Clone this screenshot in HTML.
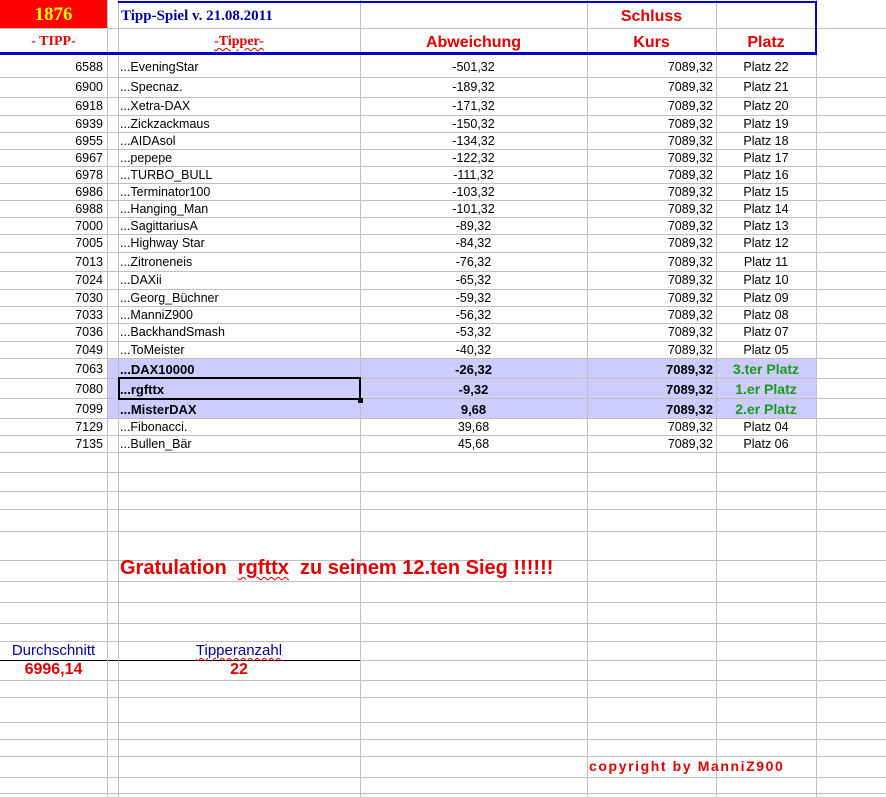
<!DOCTYPE html>
<html><head><meta charset="utf-8"><style>
*{margin:0;padding:0;box-sizing:border-box}
body{width:886px;height:797px;background:#fff;position:relative;overflow:hidden;font-family:"Liberation Sans",Arial,sans-serif;font-size:12.5px;color:#000}
.h{position:absolute;left:0;width:886px;height:1px;background:#c0c0c0}
.v{position:absolute;top:0;height:797px;width:1px;background:#c0c0c0}
.r{position:absolute;left:0;width:886px}
.r span{position:absolute;top:0;height:100%;display:flex;align-items:center;white-space:nowrap}
.a{left:0;width:103px;justify-content:flex-end}
.n{left:120px}
.ab{left:360px;width:227px;justify-content:center}
.k{left:587px;width:126px;justify-content:flex-end}
.p{left:716px;width:100px;justify-content:center}
.b span.n,.b span.ab,.b span.k{font-weight:bold;font-size:13px}
.b span.p{color:#1a9a1a;font-weight:bold;font-size:14px}
.t{position:absolute;white-space:nowrap}
.red{color:#e00000}
.wavy{text-decoration:underline wavy #e00000;text-decoration-thickness:1px;text-underline-offset:2px}
</style></head><body>
<div style="position:absolute;left:0;top:0;width:107px;height:28px;background:#ff0000"></div>
<div style="position:absolute;left:107px;top:358px;width:709px;height:60px;background:#ccccff"></div>

<div class="h" style="top:28px"></div>
<div class="h" style="top:77px"></div><div class="h" style="top:97px"></div><div class="h" style="top:115px"></div>
<div class="h" style="top:132px"></div><div class="h" style="top:149px"></div><div class="h" style="top:166px"></div>
<div class="h" style="top:183px"></div><div class="h" style="top:200px"></div><div class="h" style="top:217px"></div>
<div class="h" style="top:234px"></div><div class="h" style="top:252px"></div><div class="h" style="top:271px"></div>
<div class="h" style="top:289px"></div><div class="h" style="top:306px"></div><div class="h" style="top:323px"></div>
<div class="h" style="top:341px"></div><div class="h" style="top:358px"></div><div class="h" style="top:378px"></div>
<div class="h" style="top:398px"></div><div class="h" style="top:418px"></div><div class="h" style="top:435px"></div>
<div class="h" style="top:452px"></div><div class="h" style="top:472px"></div><div class="h" style="top:491px"></div>
<div class="h" style="top:509px"></div><div class="h" style="top:531px"></div><div class="h" style="top:560px"></div>
<div class="h" style="top:581px"></div><div class="h" style="top:602px"></div><div class="h" style="top:623px"></div>
<div class="h" style="top:641px"></div><div class="h" style="top:680px"></div>
<div class="h" style="top:697px"></div><div class="h" style="top:722px"></div><div class="h" style="top:739px"></div>
<div class="h" style="top:756px"></div><div class="h" style="top:777px"></div><div class="h" style="top:793px"></div>
<div class="h" style="top:660px;width:360px;background:#000"></div>
<div class="h" style="top:660px;left:360px;width:526px"></div>

<div class="v" style="left:107px"></div><div class="v" style="left:118px"></div>
<div class="v" style="left:360px"></div><div class="v" style="left:587px"></div>
<div class="v" style="left:716px"></div><div class="v" style="left:816px"></div>

<div style="position:absolute;left:118px;top:1px;width:699px;height:2px;background:#0000cc"></div>
<div style="position:absolute;left:815px;top:1px;width:2px;height:53px;background:#0000cc"></div>
<div style="position:absolute;left:0;top:52px;width:817px;height:3px;background:#0000cc"></div>

<div class="t" style="left:0;width:107px;top:4px;text-align:center;font-family:'Liberation Serif',serif;font-weight:bold;font-size:19px;color:#ffff00">1876</div>
<div class="t" style="left:121px;top:8px;font-family:'Liberation Serif',serif;font-weight:bold;font-size:15px;color:#0000a0">Tipp-Spiel v. 21.08.2011</div>
<div class="t red" style="left:587px;width:129px;top:8px;text-align:center;font-weight:bold;font-size:16px">Schluss</div>
<div class="t red" style="left:0;width:107px;top:34px;text-align:center;font-family:'Liberation Serif',serif;font-weight:bold;font-size:14px">- TIPP-</div>
<div class="t red" style="left:118px;width:242px;top:34px;text-align:center;font-family:'Liberation Serif',serif;font-weight:bold;font-size:14px"><span class="wavy">-Tipper-</span></div>
<div class="t red" style="left:360px;width:227px;top:34px;text-align:center;font-weight:bold;font-size:16px">Abweichung</div>
<div class="t red" style="left:587px;width:129px;top:34px;text-align:center;font-weight:bold;font-size:16px">Kurs</div>
<div class="t red" style="left:716px;width:100px;top:34px;text-align:center;font-weight:bold;font-size:16px">Platz</div>

<div class="r" style="top:57px;height:20px"><span class="a">6588</span><span class="n">...EveningStar</span><span class="ab">-501,32</span><span class="k">7089,32</span><span class="p">Platz 22</span></div>
<div class="r" style="top:77px;height:20px"><span class="a">6900</span><span class="n">...Specnaz.</span><span class="ab">-189,32</span><span class="k">7089,32</span><span class="p">Platz 21</span></div>
<div class="r" style="top:97px;height:18px"><span class="a">6918</span><span class="n">...Xetra-DAX</span><span class="ab">-171,32</span><span class="k">7089,32</span><span class="p">Platz 20</span></div>
<div class="r" style="top:115px;height:17px"><span class="a">6939</span><span class="n">...Zickzackmaus</span><span class="ab">-150,32</span><span class="k">7089,32</span><span class="p">Platz 19</span></div>
<div class="r" style="top:132px;height:17px"><span class="a">6955</span><span class="n">...AIDAsol</span><span class="ab">-134,32</span><span class="k">7089,32</span><span class="p">Platz 18</span></div>
<div class="r" style="top:149px;height:17px"><span class="a">6967</span><span class="n">...pepepe</span><span class="ab">-122,32</span><span class="k">7089,32</span><span class="p">Platz 17</span></div>
<div class="r" style="top:166px;height:17px"><span class="a">6978</span><span class="n">...TURBO_BULL</span><span class="ab">-111,32</span><span class="k">7089,32</span><span class="p">Platz 16</span></div>
<div class="r" style="top:183px;height:17px"><span class="a">6986</span><span class="n">...Terminator100</span><span class="ab">-103,32</span><span class="k">7089,32</span><span class="p">Platz 15</span></div>
<div class="r" style="top:200px;height:17px"><span class="a">6988</span><span class="n">...Hanging_Man</span><span class="ab">-101,32</span><span class="k">7089,32</span><span class="p">Platz 14</span></div>
<div class="r" style="top:217px;height:17px"><span class="a">7000</span><span class="n">...SagittariusA</span><span class="ab">-89,32</span><span class="k">7089,32</span><span class="p">Platz 13</span></div>
<div class="r" style="top:234px;height:18px"><span class="a">7005</span><span class="n">...Highway Star</span><span class="ab">-84,32</span><span class="k">7089,32</span><span class="p">Platz 12</span></div>
<div class="r" style="top:252px;height:19px"><span class="a">7013</span><span class="n">...Zitroneneis</span><span class="ab">-76,32</span><span class="k">7089,32</span><span class="p">Platz 11</span></div>
<div class="r" style="top:271px;height:18px"><span class="a">7024</span><span class="n">...DAXii</span><span class="ab">-65,32</span><span class="k">7089,32</span><span class="p">Platz 10</span></div>
<div class="r" style="top:289px;height:17px"><span class="a">7030</span><span class="n">...Georg_Büchner</span><span class="ab">-59,32</span><span class="k">7089,32</span><span class="p">Platz 09</span></div>
<div class="r" style="top:306px;height:17px"><span class="a">7033</span><span class="n">...ManniZ900</span><span class="ab">-56,32</span><span class="k">7089,32</span><span class="p">Platz 08</span></div>
<div class="r" style="top:323px;height:18px"><span class="a">7036</span><span class="n">...BackhandSmash</span><span class="ab">-53,32</span><span class="k">7089,32</span><span class="p">Platz 07</span></div>
<div class="r" style="top:341px;height:17px"><span class="a">7049</span><span class="n">...ToMeister</span><span class="ab">-40,32</span><span class="k">7089,32</span><span class="p">Platz 05</span></div>
<div class="r b" style="top:358px;height:22px"><span class="a">7063</span><span class="n">...DAX10000</span><span class="ab">-26,32</span><span class="k">7089,32</span><span class="p">3.ter Platz</span></div>
<div class="r b" style="top:378px;height:22px"><span class="a">7080</span><span class="n">...rgfttx</span><span class="ab">-9,32</span><span class="k">7089,32</span><span class="p">1.er Platz</span></div>
<div class="r b" style="top:398px;height:22px"><span class="a">7099</span><span class="n">...MisterDAX</span><span class="ab">9,68</span><span class="k">7089,32</span><span class="p">2.er Platz</span></div>
<div class="r" style="top:418px;height:17px"><span class="a">7129</span><span class="n">...Fibonacci.</span><span class="ab">39,68</span><span class="k">7089,32</span><span class="p">Platz 04</span></div>
<div class="r" style="top:435px;height:17px"><span class="a">7135</span><span class="n">...Bullen_Bär</span><span class="ab">45,68</span><span class="k">7089,32</span><span class="p">Platz 06</span></div>

<div style="position:absolute;left:118px;top:377px;width:243px;height:23px;border:2px solid #000"></div>
<div style="position:absolute;left:358px;top:398px;width:5px;height:5px;background:#000"></div>

<div class="t red" style="left:120px;top:557px;font-weight:bold;font-size:20px">Gratulation&nbsp; <span class="wavy">rgfttx</span>&nbsp; zu seinem 12.ten Sieg !!!!!!</div>
<div class="t" style="left:0;width:107px;top:642px;text-align:center;font-size:15px;color:#0000a0">Durchschnitt</div>
<div class="t" style="left:118px;width:242px;top:642px;text-align:center;font-size:15px;color:#0000a0"><span class="wavy">Tipperanzahl</span></div>
<div class="t red" style="left:0;width:107px;top:661px;text-align:center;font-weight:bold;font-size:16px">6996,14</div>
<div class="t red" style="left:118px;width:242px;top:661px;text-align:center;font-weight:bold;font-size:16px">22</div>
<div class="t red" style="left:589px;top:758px;font-weight:bold;font-size:14px;letter-spacing:1.6px;font-family:'Liberation Sans',sans-serif">copyright by ManniZ900</div>
</body></html>
